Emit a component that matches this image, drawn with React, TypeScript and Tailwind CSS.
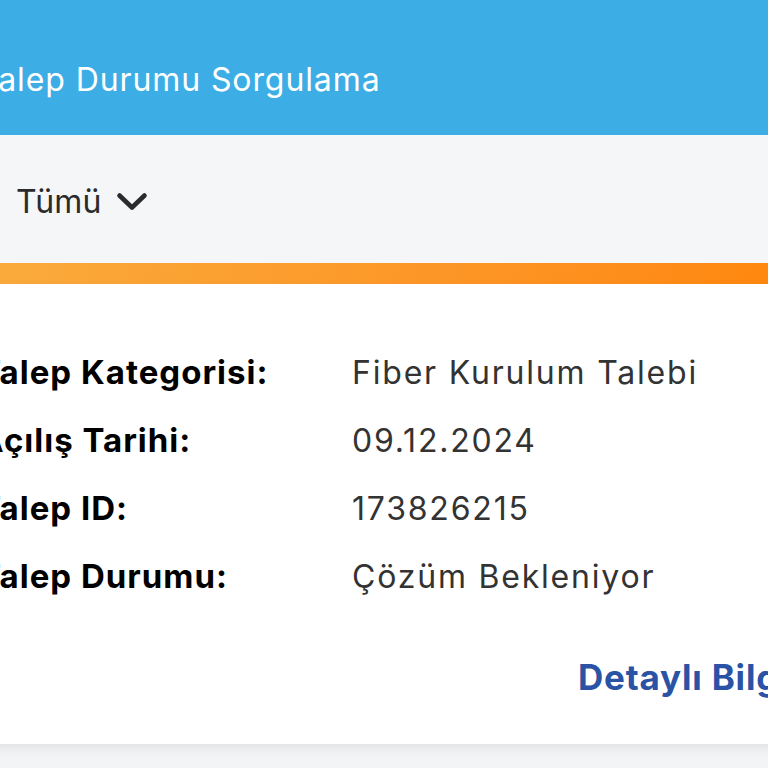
const rows: [string, string][] = [
  ["Talep Kategorisi:", "Fiber Kurulum Talebi"],
  ["Açılış Tarihi:", "09.12.2024"],
  ["Talep ID:", "173826215"],
  ["Talep Durumu:", "Çözüm Bekleniyor"],
];

const Chevron = () => (
  <svg width="32" height="20" viewBox="0 0 32 20" fill="none">
    <polyline points="3.5,3.5 16,15.5 28.5,3.5" stroke="#2b2b2b" strokeWidth="4.6" strokeLinecap="round" strokeLinejoin="round" />
  </svg>
);

const App = () => {
  return (
    <div className="w-[768px] h-[768px] overflow-hidden bg-[#f3f4f6] font-['Inter','Noto_Sans',sans-serif]">
      {/* sayfa biraz sola kaymış */}
      <div className="w-[900px] -ml-[21px] flex flex-col">
        {/* başlık */}
        <div className="h-[135px] bg-[#3dade5] flex items-center pt-[24px]">
          <div className="text-white text-[32px] leading-none tracking-[0.9px]">Talep Durumu Sorgulama</div>
        </div>

        {/* filtre */}
        <div className="h-[128px] bg-[#f4f6f8] flex items-center pl-[37px] pt-[5px]">
          <div className="flex items-center gap-[14px] text-[#2b2b2b]">
            <span className="text-[32px] leading-none tracking-[0.2px]">Tümü</span>
            <Chevron />
          </div>
        </div>

        {/* turuncu çizgi */}
        <div className="h-[21px] bg-gradient-to-r from-[#f9ab3c] to-[#ff8200]" />

        {/* kart */}
        <div className="bg-white h-[460px] shadow-[0_4px_10px_rgba(0,0,0,0.08)] pt-[72px] flex flex-col">
          <div className="flex flex-col gap-[36px]">
            {rows.map(([label, value]) => (
              <div key={label} className="flex items-baseline h-[32px]">
                <div className="w-[373px] shrink-0 text-[33px] leading-none font-bold text-black tracking-[1px]">{label}</div>
                <div className="text-[32px] leading-none text-[#333] tracking-[1.8px]">{value}</div>
              </div>
            ))}
          </div>
          <div className="mt-[68px] pl-[599px] text-[35px] leading-none font-bold text-[#2a52a5] tracking-[0.8px]">Detaylı Bilgi</div>
        </div>
      </div>
    </div>
  );
};

export default App;
